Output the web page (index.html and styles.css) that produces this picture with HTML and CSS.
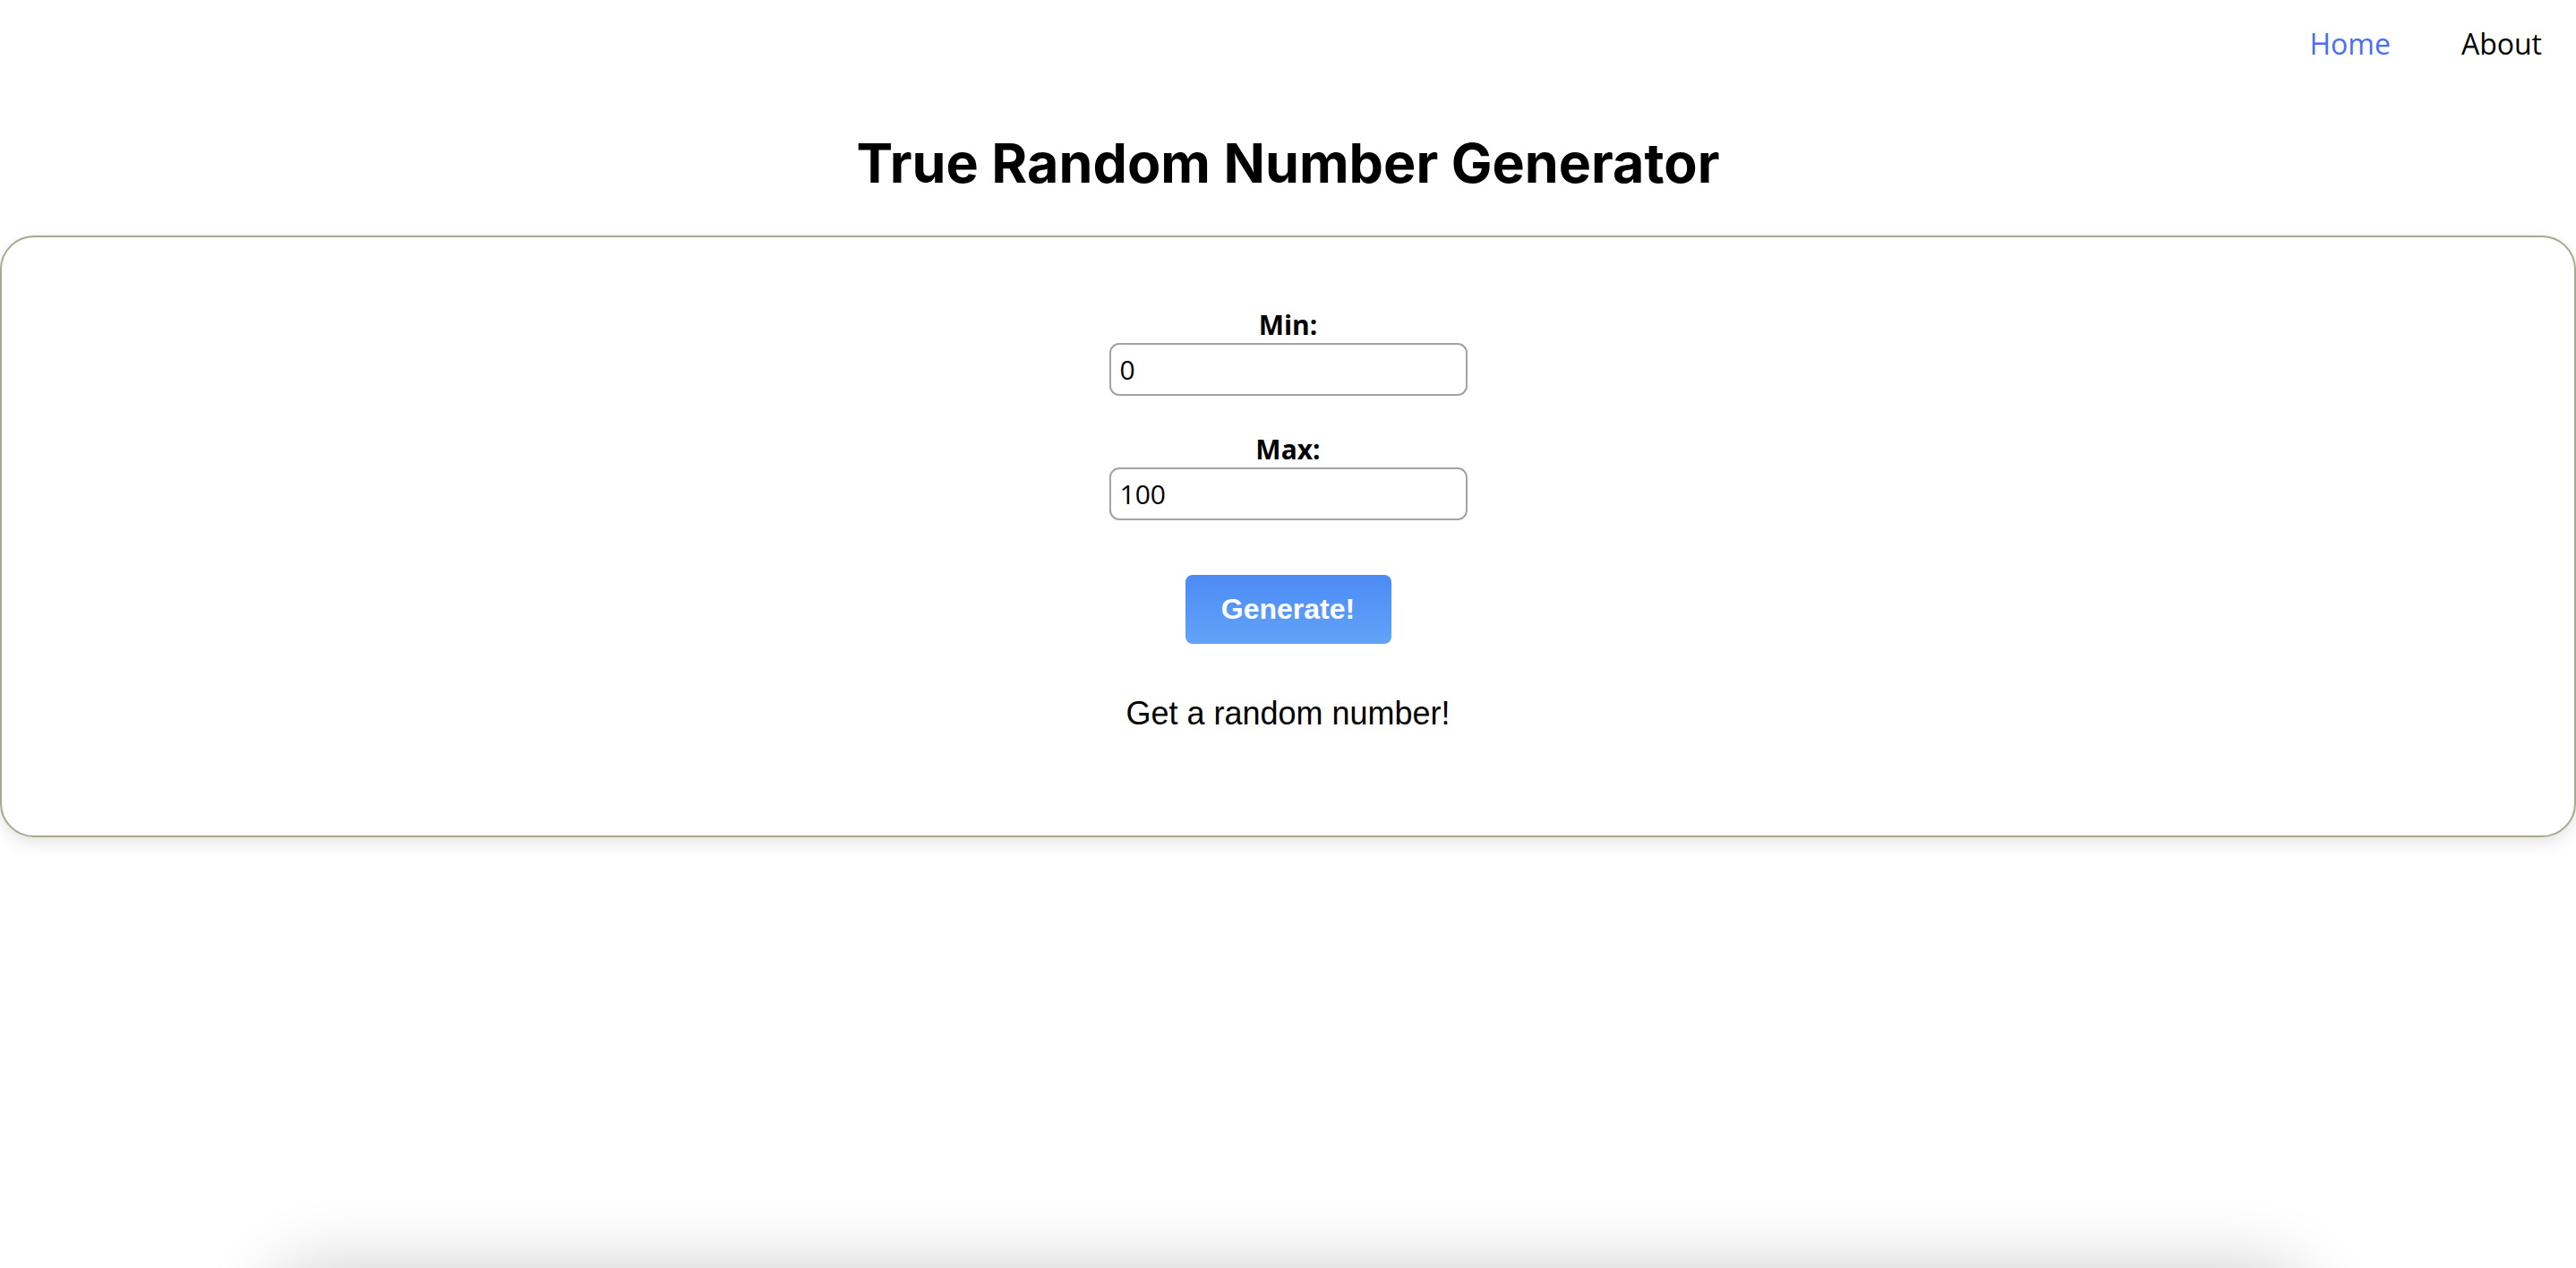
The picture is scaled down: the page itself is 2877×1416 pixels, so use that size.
FILE: index.html
```html
<!DOCTYPE html>
<html lang="en">
<head>
<meta charset="utf-8">
<title>True Random Number Generator</title>
<link rel="stylesheet" href="styles.css">
</head>
<body>
  <nav class="nav">
    <a class="nav-link active" href="#">Home</a>
    <a class="nav-link" href="#">About</a>
  </nav>
  <h1 class="title">True Random Number Generator</h1>
  <main class="card">
    <div class="field">
      <label class="label" for="min">Min:</label>
      <input class="input" id="min" type="text" value="0">
    </div>
    <div class="field field-max">
      <label class="label" for="max">Max:</label>
      <input class="input" id="max" type="text" value="100">
    </div>
    <button class="btn" type="button">Generate!</button>
    <p class="result">Get a random number!</p>
  </main>
  <section class="below"></section>
</body>
</html>
```

FILE: styles.css
```css
html, body {
  height: 100%;
}
body {
  margin: 0;
  background: #ffffff;
  color: #000;
  overflow: hidden;
  display: flex;
  flex-direction: column;
}
.nav {
  display: flex;
  justify-content: flex-end;
  gap: 79px;
  padding: 27px 38px 0 0;
}
.nav-link {
  font-family: "Open Sans", "Noto Sans", sans-serif;
  font-size: 32px;
  line-height: 44px;
  color: #000;
  text-decoration: none;
}
.nav-link.active {
  color: #4a6ef6;
}
.title {
  margin: 75px 0 45px;
  text-align: center;
  font-family: Inter, "Liberation Sans", sans-serif;
  font-weight: 700;
  font-size: 61px;
  line-height: 72px;
}
.card {
  box-sizing: border-box;
  height: 672px;
  flex: none;
  border: 2px solid #aca88f;
  border-radius: 38px;
  padding: 80px 0 0;
  display: flex;
  flex-direction: column;
  align-items: center;
  box-shadow: 0 8px 18px rgba(0, 0, 0, 0.09), 0 0 10px rgba(0, 0, 0, 0.03);
  background: #fff;
  position: relative;
  z-index: 1;
}
.field {
  display: flex;
  flex-direction: column;
  align-items: center;
  gap: 2px;
}
.field-max {
  margin-top: 42px;
}
.label {
  font-family: "Open Sans", "Noto Sans", sans-serif;
  font-weight: 700;
  font-size: 30px;
  line-height: 36px;
}
.input {
  box-sizing: border-box;
  width: 400px;
  height: 59px;
  border: 2px solid #a3a3a3;
  border-radius: 11px;
  padding: 0 10px;
  font-family: "Open Sans", "Noto Sans", sans-serif;
  font-size: 30px;
  color: #000;
  background: #fff;
  outline: none;
}
.btn {
  margin-top: 61px;
  width: 230px;
  height: 77px;
  border: none;
  border-radius: 8px;
  background: linear-gradient(to bottom, #4d8bf5, #62a3f9);
  color: #fff;
  font-family: "Liberation Sans", Arial, sans-serif;
  font-weight: 700;
  font-size: 32px;
  padding: 0;
}
.result {
  margin: 57px 0 0;
  font-family: "Liberation Sans", Arial, sans-serif;
  font-size: 36px;
  line-height: 42px;
}
.below {
  flex: none;
  margin: 481px auto 0;
  width: 2280px;
  height: 400px;
  border-radius: 60px;
  background: #fff;
  box-shadow: 0 0 80px rgba(0, 0, 0, 0.2);
}
```
